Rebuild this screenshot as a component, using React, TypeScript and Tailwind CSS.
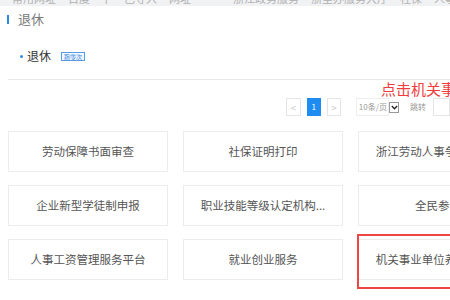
const cards = [
  "劳动保障书面审查",
  "社保证明打印",
  "浙江劳动人事争议仲裁...",
  "企业新型学徒制申报",
  "职业技能等级认定机构...",
  "全民参保",
  "人事工资管理服务平台",
  "就业创业服务",
  "机关事业单位养老保险...",
];

export default function App() {
  return (
    <div className="w-[450px] h-[300px] overflow-hidden bg-white font-['Noto_Sans_CJK_SC','Noto_Sans',sans-serif]">
      {/* browser bookmark bar, mostly cropped away */}
      <div className="h-[6px] bg-[#f1f2f4] overflow-hidden">
        <div className="-mt-[10px] flex items-center gap-[6px] pl-[6px] text-[11px] text-[#b0b0b0] whitespace-nowrap">
          <span className="w-[9px] h-[11px] bg-[#c4c4c4]" />
          <span>常用网址</span>
          <span className="w-[9px] h-[11px] bg-[#7fa6ec]" />
          <span>百度一下</span>
          <span className="w-[9px] h-[11px] bg-[#f2cc8e]" />
          <span>已导入</span>
          <span className="w-[9px] h-[11px] bg-[#ddd0a8]" />
          <span>网址</span>
          <span className="w-[9px] h-[11px] bg-[#f2ae84]" />
          <span className="ml-[30px]">浙江政务服务</span>
          <span className="w-[9px] h-[11px] bg-[#4a86e4]" />
          <span>浙里办服务大厅</span>
          <span className="w-[9px] h-[11px] bg-[#c4c4c4]" />
          <span>社保</span>
          <span className="w-[9px] h-[11px] bg-[#c4c4c4]" />
          <span>人事服务</span>
        </div>
      </div>

      {/* heading */}
      <div className="mt-[5px] h-[16px] flex items-center pl-[7px]">
        <span className="w-[2px] h-[9px] bg-[#2b8be6]" />
        <span className="ml-[9px] text-[13px] leading-[16px] text-[#7a7a7a]">退休</span>
      </div>

      {/* sub item */}
      <div className="mt-[22px] h-[14px] flex items-center pl-[20px]">
        <span className="w-[3px] h-[3px] rounded-full bg-[#2b8be6]" />
        <span className="ml-[4px] text-[12px] leading-[14px] text-[#333]">退休</span>
        <span className="ml-[10px] h-[9px] px-[2px] flex items-center border border-[#5a9be6] bg-[#f2f8ff] text-[6px] leading-[7px] text-[#3a86de]">
          跑零次
        </span>
      </div>

      <div className="mt-[16px] ml-[8px] h-px bg-[#e8e8e8]" />

      {/* annotation */}
      <div className="h-[18px] pl-[381px] text-[15px] leading-[18px] text-[#f03c3c] whitespace-nowrap">
        点击机关事业单位
      </div>

      {/* pagination */}
      <div className="h-[18px] flex items-center pl-[286px] text-[8px] text-[#999] whitespace-nowrap">
        <span className="w-[17px] h-[18px] border border-[#e5e5e5] flex items-center justify-center text-[#ccc] text-[10px]">
          &lt;
        </span>
        <span className="ml-[6px] w-[17px] h-[18px] bg-[#1e8cf0] flex items-center justify-center text-white text-[8px]">
          1
        </span>
        <span className="ml-[6px] w-[17px] h-[18px] border border-[#e5e5e5] flex items-center justify-center text-[#ccc] text-[10px]">
          &gt;
        </span>
        <span className="ml-[15px] w-[39px] h-[18px] border border-[#eee] flex items-center justify-center">
          10条/页
        </span>
        <span className="w-[11px] h-[11px] border border-[#999] flex items-center justify-center">
          <svg width="7" height="5" viewBox="0 0 7 5">
            <path d="M0.8 1 L3.5 3.8 L6.2 1" fill="none" stroke="#222" strokeWidth="1.3" />
          </svg>
        </span>
        <span className="ml-[11px]">跳转</span>
        <span className="ml-[7px] w-[20px] h-[18px] border border-[#e5e5e5]" />
      </div>

      {/* service cards */}
      <div className="mt-[15px] pl-[8px] grid grid-cols-[160px_160px_160px] gap-x-[15px] gap-y-[13px]">
        {cards.map((c, i) => (
          <div
            key={c}
            className="relative h-[41px] border border-[#ececec] bg-white flex items-center justify-center text-[11.5px] text-[#555] whitespace-nowrap"
          >
            {c}
            {i === 8 && (
              <span className="absolute -left-[2px] -top-[6px] w-[170px] h-[55px] border-2 border-[#f04545]" />
            )}
          </div>
        ))}
      </div>
    </div>
  );
}
